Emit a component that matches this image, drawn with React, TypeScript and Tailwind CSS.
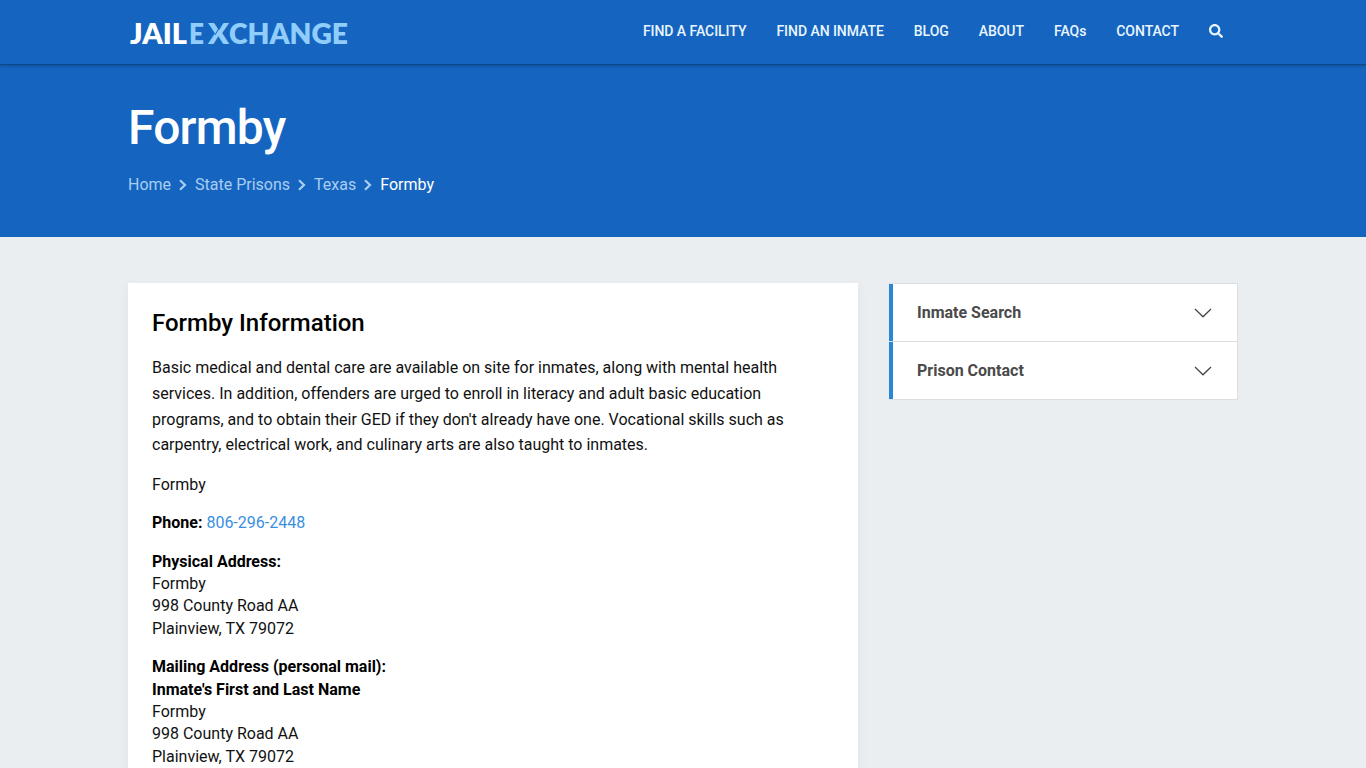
import { FaSearch } from "react-icons/fa";

type CrumbType = { label: string; active?: boolean };

const navLinks = [
  "FIND A FACILITY",
  "FIND AN INMATE",
  "BLOG",
  "ABOUT",
  "FAQs",
  "CONTACT",
];

const crumbs: CrumbType[] = [
  { label: "Home" },
  { label: "State Prisons" },
  { label: "Texas" },
  { label: "Formby", active: true },
];

const panels = ["Inmate Search", "Prison Contact"];

const Logo = () => (
  <svg
    width="222"
    height="40"
    viewBox="0 0 222 40"
    className="font-[Lato,sans-serif] text-[29px] font-extrabold overflow-visible"
    aria-label="Jail Exchange"
  >
    <text x="2" y="32" fill="#fff" textLength="57" lengthAdjust="spacingAndGlyphs">
      JAIL
    </text>
    <text x="61" y="32" fill="#90cdfa" textLength="15" lengthAdjust="spacingAndGlyphs">
      E
    </text>
    <text x="80" y="32" fill="#90cdfa" textLength="21" lengthAdjust="spacingAndGlyphs">
      X
    </text>
    {/* cut between the two strokes of the X */}
    <path d="M94.5 10 L87 23" fill="none" stroke="#1565c0" strokeWidth="1" />
    <text x="101" y="32" fill="#90cdfa" textLength="119" lengthAdjust="spacingAndGlyphs">
      CHANGE
    </text>
  </svg>
);

const Header = () => (
  <header className="h-[65px] border-b border-[#0f4788] shadow-[0_1px_3px_rgba(0,0,0,0.25)]">
    <div className="w-[1110px] mx-auto h-[62px] flex items-center justify-between pr-[15px]">
      <a href="#" className="block pt-[2px]">
        <Logo />
      </a>
      <nav className="flex items-center gap-[30px] text-sm font-medium tracking-[-0.05px] text-[#e9f5ff]">
        {navLinks.map((link) => (
          <a key={link} href="#">
            {link}
          </a>
        ))}
        <FaSearch className="w-[14px] h-[14px] -mt-px" />
      </nav>
    </div>
  </header>
);

const Hero = () => (
  <div className="w-[1110px] mx-auto h-[172px] pt-[34px]">
    <h1 className="text-5xl leading-[58px] font-medium tracking-[-0.8px] text-white">
      Formby
    </h1>
    <ul className="flex items-center mt-4 text-base leading-6">
      {crumbs.map((crumb, i) => (
        <li key={crumb.label} className="flex items-center">
          {i > 0 && (
            <svg width="24" height="12" viewBox="0 0 24 12">
              <path
                d="M9 1.2 L14 6 L9 10.8"
                fill="none"
                stroke="#a9cdf2"
                strokeWidth="2.2"
              />
            </svg>
          )}
          <a href="#" className={crumb.active ? "text-white" : "text-[#a9cdf2]"}>
            {crumb.label}
          </a>
        </li>
      ))}
    </ul>
  </div>
);

const FacilityInfo = () => (
  <article className="w-[730px] bg-white px-6 pt-6 pb-10 text-base text-[#111] shadow-[0_4px_12px_rgba(0,0,0,0.05)]">
    <h2 className="text-2xl leading-8 font-medium text-black">
      Formby Information
    </h2>
    <p className="mt-4 pt-[0.4px] leading-[25.6px]">
      Basic medical and dental care are available on site for inmates, along
      with mental health services. In addition, offenders are urged to enroll in
      literacy and adult basic education programs, and to obtain their GED if
      they don't already have one. Vocational skills such as carpentry,
      electrical work, and culinary arts are also taught to inmates.
    </p>
    <div className="mt-4 space-y-4 leading-[22.4px]">
      <p>Formby</p>
      <p>
        <b className="font-bold text-black">Phone:</b>{" "}
        <a href="#" className="text-[#3a8fdf]">
          806-296-2448
        </a>
      </p>
      <p>
        <b className="font-bold text-black">Physical Address:</b>
        <br />
        Formby
        <br />
        998 County Road AA
        <br />
        Plainview, TX 79072
      </p>
      <p>
        <b className="font-bold text-black">Mailing Address (personal mail):</b>
        <br />
        <b className="font-bold text-black">Inmate's First and Last Name</b>
        <br />
        Formby
        <br />
        998 County Road AA
        <br />
        Plainview, TX 79072
      </p>
    </div>
  </article>
);

const Sidebar = () => (
  <aside className="w-[349px] border-t border-r border-[#dcdfe2]">
    {panels.map((panel) => (
      <div key={panel} className="border-b border-[#dcdfe2]">
        <button className="w-full h-[57px] flex items-center justify-between border-l-4 border-[#2987d8] bg-white pl-6 pr-[25px] font-bold text-[#4a4a4a]">
          {panel}
          <svg width="18" height="10" viewBox="0 0 18 10">
            <path
              d="M1 1 L9 8.8 L17 1"
              fill="none"
              stroke="#444"
              strokeWidth="1.2"
            />
          </svg>
        </button>
      </div>
    ))}
  </aside>
);

const App = () => {
  return (
    <div className="h-screen overflow-hidden bg-[#eaeef1] font-[Roboto,sans-serif]">
      <div className="bg-[#1565c0]">
        <Header />
        <Hero />
      </div>
      <main className="w-[1110px] mx-auto mt-[46px] flex items-start justify-between">
        <FacilityInfo />
        <Sidebar />
      </main>
    </div>
  );
};

export default App;
